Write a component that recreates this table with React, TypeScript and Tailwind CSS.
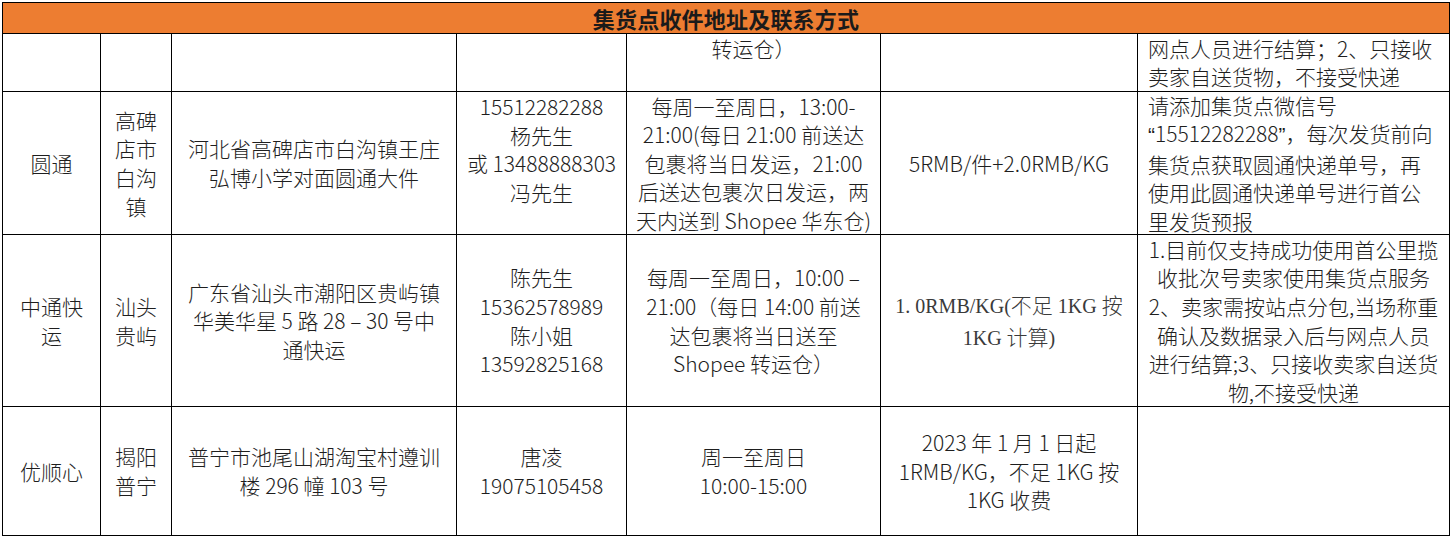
import type { ReactNode } from "react"

interface CellSpec {
  lines: ReactNode[]
  left?: boolean
  top?: boolean
  className?: string
}

// latin runs of the 1.0RMB/KG cell use a thin serif, like the original sheet
const Serif = ({ children }: { children: ReactNode }) => (
  <span className="font-['Liberation_Serif',serif] text-[20px]">{children}</span>
)

const Q = ({ children }: { children: ReactNode }) => (
  <span className="font-['Liberation_Sans',sans-serif]">{children}</span>
)

const rows: CellSpec[][] = [
  [
    { lines: [] },
    { lines: [] },
    { lines: [] },
    { lines: [] },
    { lines: ["转运仓）"], top: true },
    { lines: [] },
    {
      lines: ["网点人员进行结算；2、只接收", "卖家自送货物，不接受快递"],
      left: true,
      top: true,
      className: "leading-[28px]",
    },
  ],
  [
    { lines: ["圆通"] },
    { lines: ["高碑", "店市", "白沟", "镇"] },
    { lines: ["河北省高碑店市白沟镇王庄", "弘博小学对面圆通大件"] },
    { lines: ["15512282288", "杨先生", "或 13488888303", "冯先生"], top: true },
    {
      lines: [
        "每周一至周日，13:00-",
        "21:00(每日 21:00 前送达",
        "包裹将当日发运，21:00",
        "后送达包裹次日发运，两",
        "天内送到 Shopee 华东仓)",
      ],
    },
    { lines: ["5RMB/件+2.0RMB/KG"] },
    {
      lines: [
        "请添加集货点微信号",
        <>
          <Q>“</Q>15512282288<Q>”</Q>，每次发货前向
        </>,
        "集货点获取圆通快递单号，再",
        "使用此圆通快递单号进行首公",
        "里发货预报",
      ],
      left: true,
    },
  ],
  [
    { lines: ["中通快", "运"] },
    { lines: ["汕头", "贵屿"] },
    { lines: ["广东省汕头市潮阳区贵屿镇", "华美华星 5 路 28 – 30 号中", "通快运"] },
    { lines: ["陈先生", "15362578989", "陈小姐", "13592825168"] },
    {
      lines: [
        "每周一至周日，10:00 –",
        "21:00（每日 14:00 前送",
        "达包裹将当日送至",
        "Shopee 转运仓）",
      ],
    },
    {
      lines: [
        <>
          <Serif>1. 0RMB/KG(</Serif>不足<Serif> 1KG </Serif>按
        </>,
        <>
          <Serif>1KG </Serif>计算<Serif>)</Serif>
        </>,
      ],
      className: "text-[#3a3a3a]",
    },
    {
      lines: [
        "1.目前仅支持成功使用首公里揽",
        "收批次号卖家使用集货点服务",
        "2、卖家需按站点分包,当场称重",
        "确认及数据录入后与网点人员",
        "进行结算;3、只接收卖家自送货",
        "物,不接受快递",
      ],
    },
  ],
  [
    { lines: ["优顺心"] },
    { lines: ["揭阳", "普宁"] },
    { lines: ["普宁市池尾山湖淘宝村遵训", "楼 296 幢 103 号"] },
    { lines: ["唐凌", "19075105458"] },
    { lines: ["周一至周日", "10:00-15:00"] },
    { lines: ["2023 年 1 月 1 日起", "1RMB/KG，不足 1KG 按", "1KG 收费"] },
    { lines: [] },
  ],
]

function Cell({ lines, left, top, className = "leading-[28.6px]" }: CellSpec) {
  return (
    <div
      className={`flex min-w-0 flex-col overflow-visible border-r border-b border-black ${
        left ? "items-start pl-[10px]" : "items-center text-center"
      } ${top ? "justify-start" : "justify-center"} ${className}`}
    >
      {lines.map((line, i) => (
        <div key={i} className="whitespace-nowrap">
          {line}
        </div>
      ))}
    </div>
  )
}

export default function App() {
  return (
    <div className="h-[540px] w-[1451px] overflow-hidden bg-white pt-[2px] pl-[2px] font-['Noto_Sans_CJK_SC',sans-serif] text-[21px] font-light text-[#1e1e1e]">
      <div className="grid w-[1448px] grid-cols-[98px_71px_285px_170px_254px_257px_312px] grid-rows-[31px_58px_143px_172px_129px] border-t border-l border-black">
        <div className="col-span-7 flex items-center justify-center border-r border-b border-black bg-[#ED7D31] text-[22px] font-bold tracking-[0.2px] text-[#1a1a1a]">
          集货点收件地址及联系方式
        </div>
        {rows.map((row, r) =>
          row.map((cell, c) => <Cell key={`${r}-${c}`} {...cell} />)
        )}
      </div>
    </div>
  )
}
